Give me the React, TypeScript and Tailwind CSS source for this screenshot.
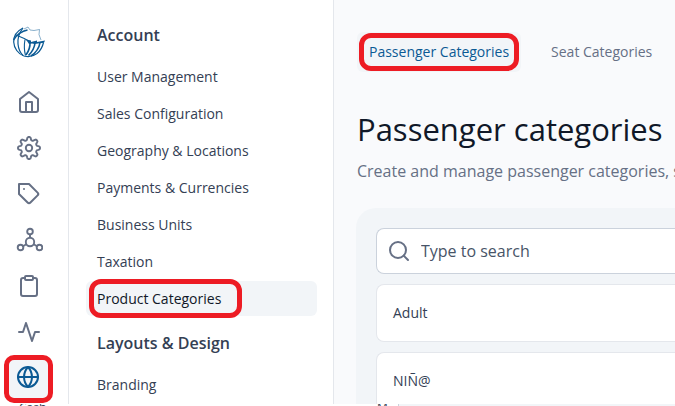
import { useState } from "react";
import { FiActivity, FiClipboard, FiGlobe, FiHome, FiSearch, FiTag } from "react-icons/fi";

const ACCOUNT_LINKS = [
  "User Management",
  "Sales Configuration",
  "Geography & Locations",
  "Payments & Currencies",
  "Business Units",
  "Taxation",
  "Product Categories",
];

const TABS = ["Passenger Categories", "Seat Categories"];

const CATEGORIES = ["Adult", "NIÑ@"];

function Logo() {
  return (
    <svg viewBox="0 0 34 34" className="size-[34px]" fill="none" stroke="#0b5a94" aria-hidden="true">
      {/* globe outline and meridians */}
      <path d="M11 3C5 6 1.500 11 1.700 17c.3 6 4.300 12 10.300 14 4 1.200 9 .5 13-2.500 3.500-2.800 5.500-6.500 6.500-11" strokeWidth="1.200" />
      <path d="M11 3C7 8 5.500 13 6 19c.4 4.500 2 8.500 5 11.500" strokeWidth="1.200" />
      <path d="M1.500 15C5 9.500 10 6 15.500 5" strokeWidth="1.400" />
      <path d="M4 10c4 1.500 9 3.500 14.500 7" strokeWidth="1.200" />
      {/* torn upper edge */}
      <path d="M12 4l4-2 2 3 4 .5 5.500-1 -.5 5 2 5.500" strokeWidth=".8" opacity=".6" />
      {/* banners */}
      <path d="M14 14.500l5 1v1.500l6-1.500v1.500l8-1.500-1 2.200-6 .800-3.500.500-2.500-.500-3 .500z" fill="#0b5a94" stroke="none" />
      <path d="M13 14.500c-1 5.500-.800 11 .5 16" strokeWidth="1.100" />
      <path d="M18 17c.300 5-1.500 9.500-4 13" strokeWidth="1.600" />
      <path d="M23 18c-.500 5-3 9-6.500 12.500" strokeWidth="1.600" />
      <path d="M28 17.500c-.700 5-4 10-9 13.500" strokeWidth="1.600" />
    </svg>
  );
}

// eight rounded teeth around a small hub
const COG_PATH =
  Array.from({ length: 96 }, (_, i) => {
    const angle = (i / 96) * Math.PI * 2;
    const wave = Math.tanh(1.8 * Math.cos(angle * 8));
    const radius = 9.5 + 1.6 * wave;
    const x = 13 + radius * Math.sin(angle);
    const y = 13 - radius * Math.cos(angle);
    return `${i ? "L" : "M"}${x.toFixed(2)} ${y.toFixed(2)}`;
  }).join("") + "z";

function CogIcon() {
  return (
    <svg viewBox="0 0 26 26" className="size-[26px]" fill="none" stroke="currentColor" strokeWidth="1.900" strokeLinejoin="round" aria-hidden="true">
      <circle cx="13" cy="13" r="3.200" />
      <path d={COG_PATH} />
    </svg>
  );
}

function NodesIcon() {
  return (
    <svg viewBox="0 0 28 26" className="h-[26px] w-7" fill="none" stroke="currentColor" strokeWidth="1.900" aria-hidden="true">
      <circle cx="15" cy="4.500" r="2.800" />
      <circle cx="15" cy="15" r="4.200" />
      <circle cx="5.500" cy="20.500" r="2.800" />
      <circle cx="24.500" cy="20.500" r="2.800" />
      <path d="M15 7.500v3.300M11.300 17.200l-3.300 2M18.700 17.200l3.300 2" />
    </svg>
  );
}

const RAIL = [
  { label: "Home", icon: <FiHome className="size-6" /> },
  { label: "Settings", icon: <CogIcon /> },
  { label: "Pricing", icon: <FiTag className="size-6" /> },
  { label: "Network", icon: <NodesIcon /> },
  { label: "Manifests", icon: <FiClipboard className="size-6" /> },
  { label: "Activity", icon: <FiActivity className="size-6" /> },
];

export default function App() {
  const [tab, setTab] = useState(TABS[0]);
  const [active, setActive] = useState("Product Categories");

  return (
    <div className="flex h-screen flex-col bg-[#f9fafc] font-['Open_Sans',sans-serif] text-[#344054]">
      <div className="flex min-h-0 flex-1 overflow-hidden">
        {/* Icon rail */}
        <nav aria-label="Main" className="flex w-[69px] shrink-0 flex-col border-r border-[#e4e7ec] bg-white pt-[25px] text-[#667085]">
          <a href="#" aria-label="Dashboard" className="mb-5 ml-3 block">
            <Logo />
          </a>
          <div className="flex w-[58px] flex-col">
            {RAIL.map((item) => (
              <a key={item.label} href="#" aria-label={item.label} className="flex h-[46px] shrink-0 items-center justify-center">
                {item.icon}
              </a>
            ))}
          </div>
          <a
            href="#"
            aria-label="Localization"
            className="ml-1 flex h-12 w-[49px] shrink-0 items-center justify-center rounded-[10px] border-[5px] border-[#ed1c24] bg-[#f2f5f8] pr-0.5 pb-1 text-[#0b5a94]"
          >
            <FiGlobe className="size-6" />
          </a>
        </nav>

        {/* Section menu */}
        <aside className="w-[265px] shrink-0 border-r border-[#e4e7ec] bg-white pt-[23px] pr-4 pl-[17px]">
          <h2 className="px-[11px] text-base leading-6 font-semibold">Account</h2>
          <ul className="pt-3">
            {ACCOUNT_LINKS.map((link) => (
              <li key={link} className="relative pb-[2px]">
                <a
                  href="#"
                  onClick={() => setActive(link)}
                  className={`block rounded-md px-[11px] text-sm leading-[35px] ${active === link ? "bg-[#f2f5f8] text-[#101828]" : ""}`}
                >
                  {link}
                </a>
                {active === link && (
                  <span className="pointer-events-none absolute -top-0.5 left-[3px] h-[39px] w-[153px] rounded-xl border-[5px] border-[#ed1c24]" />
                )}
              </li>
            ))}
          </ul>
          <h2 className="px-[11px] pt-[13px] text-base leading-6 font-semibold">Layouts &amp; Design</h2>
          <ul className="pt-3">
            <li>
              <a href="#" className="block px-[11px] text-sm leading-[35px]">Branding</a>
            </li>
          </ul>
        </aside>

        <main className="min-w-0 flex-1 pt-8 pl-[22px]">
          <header className="pl-px">
            <div role="tablist" className="flex gap-[18px]">
              {TABS.map((name) => (
                <button
                  key={name}
                  role="tab"
                  aria-selected={tab === name}
                  onClick={() => setTab(name)}
                  className={`relative h-10 shrink-0 rounded-md px-3 text-sm whitespace-nowrap ${tab === name ? "bg-[#f2f5f8] text-[#0b5a94]" : "text-[#667085]"}`}
                >
                  {name}
                  {tab === name && (
                    <span className="pointer-events-none absolute inset-x-0.5 inset-y-px rounded-xl border-[5px] border-[#ed1c24]" />
                  )}
                </button>
              ))}
            </div>

            <h1 className="pt-[37px] text-[31px] leading-10 whitespace-nowrap text-[#101828]">Passenger categories</h1>
            <p className="pt-[10px] text-base leading-6 whitespace-nowrap text-[#667085]">
              Create and manage passenger categories, set
            </p>
          </header>

          <section className="mt-[25px] rounded-tl-[20px] bg-[#f2f5f8] pt-5 pb-6 pl-5">
            <label className="flex h-[46px] items-center gap-[10px] rounded-l-lg border border-r-0 border-[#cbd2dc] bg-white pl-[10px]">
              <FiSearch className="size-6 shrink-0 text-[#667085]" />
              <input
                type="search"
                aria-label="Search categories"
                placeholder="Type to search"
                className="min-w-0 flex-1 text-base outline-none placeholder:text-[#475467]"
              />
            </label>
            <ul className="flex flex-col gap-[10px] pt-[10px]">
              {CATEGORIES.map((category) => (
                <li key={category} className="rounded-l-lg border border-r-0 border-[#e4e7ec] bg-white pl-4 text-sm leading-[56px]">
                  {category}
                </li>
              ))}
            </ul>
          </section>
        </main>
      </div>

      {/* Docked strip, only its top edge is on screen */}
      <footer className="flex h-0.5 shrink-0 overflow-hidden bg-white text-xs leading-2 text-[#344054]">
        <span className="w-[377px] pl-[19px]">Cash</span>
        <span className="w-[21px]">M</span>
        <span className="flex-1 border-l border-[#cbd2dc] bg-[#f2f5f8]" />
      </footer>
    </div>
  );
}
